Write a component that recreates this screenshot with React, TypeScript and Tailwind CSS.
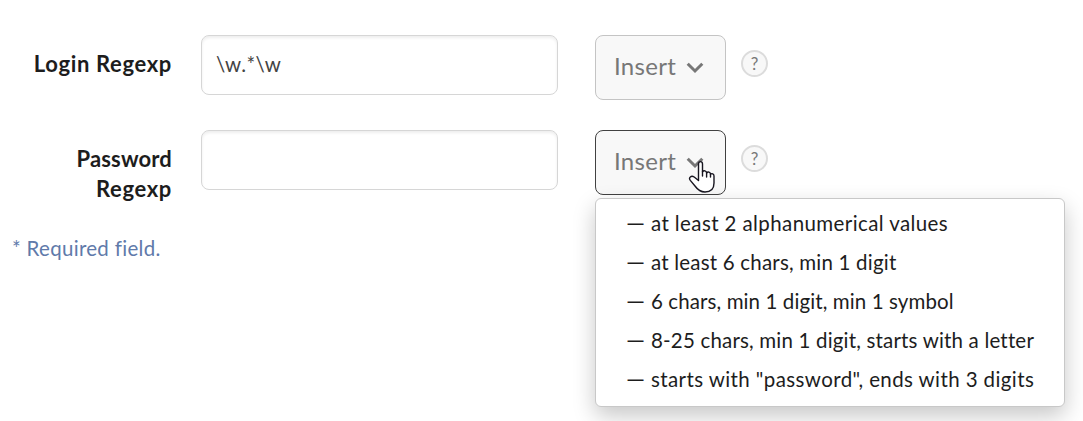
import React, { useState } from "react";

const patterns = [
  { text: "at least 2 alphanumerical values", tracking: "tracking-[0.4px]" },
  { text: "at least 6 chars, min 1 digit", tracking: "tracking-[0.2px]" },
  { text: "6 chars, min 1 digit, min 1 symbol", tracking: "tracking-[0.1px]" },
  { text: "8-25 chars, min 1 digit, starts with a letter", tracking: "tracking-[0.18px]" },
  { text: "starts with \"password\", ends with 3 digits", tracking: "tracking-[0.4px]" },
];

function InsertButton({ active, onClick }: { active?: boolean; onClick?: () => void }) {
  return (
    <button
      type="button"
      onClick={onClick}
      className={`flex h-[65px] w-[131px] items-center rounded-[8px] border bg-[#f8f8f8] pl-[18px] text-[24px] leading-[30px] text-[#777] ${
        active ? "border-[#414141]" : "border-[#c4c4c4]"
      }`}
    >
      <span className="w-[72px] pb-[4px] text-left whitespace-nowrap tracking-[0.3px]">Insert</span>
      <svg width="18" height="12" viewBox="0 0 18 12" className="mt-[1px]" fill="none" stroke="#777" strokeWidth="3">
        <path d="M1.7 1.7 L9 9 L16.3 1.7" />
      </svg>
    </button>
  );
}

function Help() {
  return (
    <span className="mt-[15px] ml-[15px] flex h-[27px] w-[27px] items-center justify-center rounded-full border-2 border-[#dcdcdc] bg-[#f8f8f8] text-[17px] leading-none text-[#777]">
      ?
    </span>
  );
}

function Hand() {
  return (
    <svg className="pointer-events-none absolute top-[30px] left-[93px] z-20" width="28" height="35" viewBox="0 0 28 35" fill="#fff" stroke="#17151f" strokeWidth="1.4" strokeLinejoin="round" strokeLinecap="round">
      <path d="M10.5 18.5 V4 C10.5 .8 14.5 .8 14.5 4 V11.8 C15.5 10.1 18.6 10.5 18.6 13 C19.8 11.4 22.5 12 22.5 14.2 C23.8 13 26 13.7 26 16 V23 C26 29 22.5 32 17 32 C12.5 32 9.5 29.5 7 26 L2.3 20.4 C.2 17.5 3.2 15.2 6.2 17 L10.5 20.5 Z" />
      <path d="M14.5 11.8 V16 M18.6 13 V17 M22.5 14.2 V17" fill="none" />
    </svg>
  );
}

function Field({ value }: { value: string }) {
  return (
    <input
      defaultValue={value}
      className="ml-[30px] h-[60px] w-[357px] shrink-0 rounded-[8px] border border-[#d6d6d6] bg-white px-[14px] pb-[3px] text-[20.5px] tracking-[0.4px] text-[#444] shadow-[inset_0_2px_3px_rgba(0,0,0,0.07)] outline-none"
    />
  );
}

export default function App() {
  const [open, setOpen] = useState(true);
  return (
    <main className="h-[421px] w-[1083px] overflow-hidden bg-white pt-[35px] font-['Lato',sans-serif] text-[#1d1d1d]">
      <div className="flex h-[95px] items-start">
        <label className="w-[172px] shrink-0 pt-[14px] text-right text-[22px] leading-[30px] font-bold tracking-[0.65px]">Login Regexp</label>
        <div className="-ml-px"><Field value="\w.*\w" /></div>
        <div className="ml-[37px]"><InsertButton /></div>
        <Help />
      </div>
      <div className="flex h-[103px] items-start">
        <label className="w-[172px] shrink-0 pt-[14px] text-right text-[22px] leading-[30px] font-bold">
          <span className="tracking-[0.15px]">Password</span><br /><span className="tracking-[0.65px]">Regexp</span>
        </label>
        <div className="-ml-px"><Field value="" /></div>
        <div className="relative ml-[37px]">
          <InsertButton active onClick={() => setOpen(!open)} />
          <Hand />
          {open && (
            <ul className="absolute top-[68px] left-0 z-10 h-[209px] w-[470px] rounded-[6px] border border-[#c8c8c8] bg-white pt-[5px] pl-[30px] shadow-[0_9px_22px_rgba(0,0,0,0.22)]">
              {patterns.map((p) => (
                <li key={p.text} className="flex h-[39px] text-[20.5px] leading-[39px] whitespace-nowrap">
                  <span className="w-[25px] text-[24px] leading-[35px]">—</span>
                  <span className={p.tracking}>{p.text}</span>
                </li>
              ))}
            </ul>
          )}
        </div>
        <Help />
      </div>
      <p className="pl-[12px] text-[20.5px] leading-[30px] tracking-[0.3px] text-[#607aaa]">* Required field.</p>
    </main>
  );
}
